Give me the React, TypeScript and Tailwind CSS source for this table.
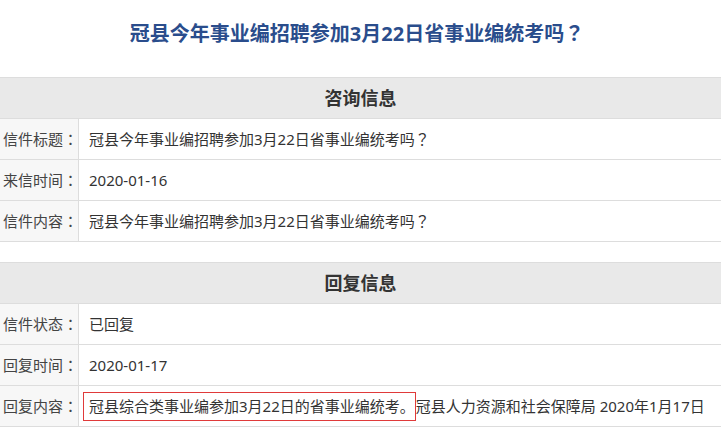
import React from "react";

const font = { fontFamily: '"Noto Sans", "Noto Sans CJK SC", sans-serif' };
const punct = { fontFamily: '"Noto Sans CJK TC", sans-serif' };

function P({ c }: { c: string }) {
  return <span style={punct}>{c}</span>;
}

function Row({ label, children }: { label: string; children: React.ReactNode }) {
  return (
    <div className="flex h-[41px] border-b border-[#dddddd]">
      <div className="w-[79px] shrink-0 bg-[#f7f7f7] border-r border-[#dddddd] flex items-center pl-[3px] text-[15px] leading-[20px] text-[#444] whitespace-nowrap">
        {label}
        <P c="：" />
      </div>
      <div className="flex-1 flex items-center pl-[10px] text-[15px] leading-[20px] text-[#333] whitespace-nowrap">
        {children}
      </div>
    </div>
  );
}

function Header({ title }: { title: string }) {
  return (
    <div className="h-[42px] border-y border-[#dddddd] bg-[#e9e9e9] flex items-center justify-center text-[18px] font-bold text-[#333] leading-[24px]">
      {title}
    </div>
  );
}

export default function App() {
  return (
    <div className="w-[721px] h-[428px] bg-white overflow-hidden" style={font}>
      <div className="h-[77px] flex items-center justify-center pb-[11px] pr-[7px]">
        <h1 className="text-[20px] font-bold text-[#2a4d8c] leading-[26px]">
          冠县今年事业编招聘参加3月22日省事业编统考吗
          <P c="？" />
        </h1>
      </div>
      <Header title="咨询信息" />
      <Row label="信件标题">
        <span>冠县今年事业编招聘参加3月22日省事业编统考吗</span>
        <P c="？" />
      </Row>
      <Row label="来信时间">2020-01-16</Row>
      <Row label="信件内容">
        <span>冠县今年事业编招聘参加3月22日省事业编统考吗</span>
        <P c="？" />
      </Row>
      <div className="h-[20px]" />
      <Header title="回复信息" />
      <Row label="信件状态">已回复</Row>
      <Row label="回复时间">2020-01-17</Row>
      <Row label="回复内容">
        <span className="-ml-[6px] border border-[#e03a3a] pl-[5px] pr-0 h-[29px] flex items-center">
          冠县综合类事业编参加3月22日的省事业编统考。
        </span>
        <span>冠县人力资源和社会保障局 2020年1月17日</span>
      </Row>
    </div>
  );
}
